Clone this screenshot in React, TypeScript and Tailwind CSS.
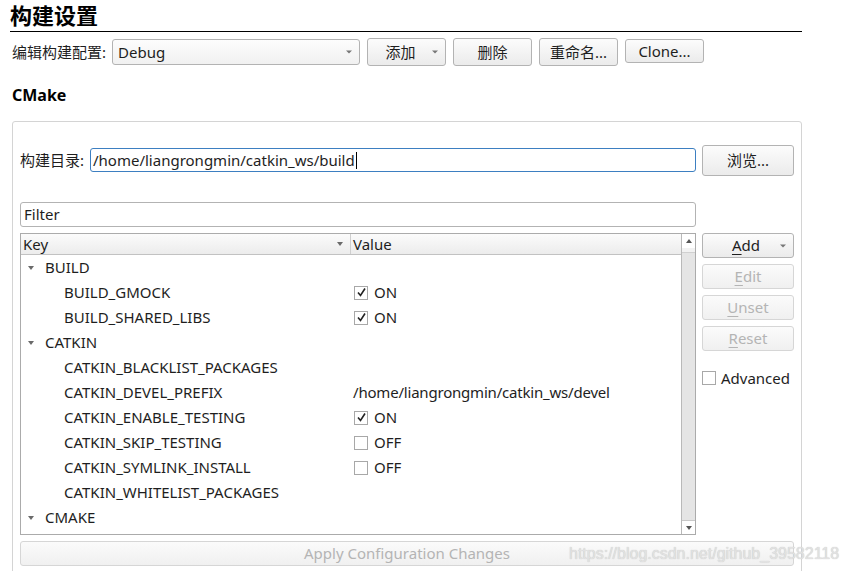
import React from "react";

const font = { fontFamily: '"Noto Sans", "Noto Sans CJK SC", sans-serif' };

function Btn({ children, className = "", disabled = false, arrow = false }: { children: React.ReactNode; className?: string; disabled?: boolean; arrow?: boolean }) {
  return (
    <div
      className={
        "relative flex items-center justify-center rounded-[3px] border text-[15px] " +
        (disabled
          ? "border-[#d6d6d6] bg-gradient-to-b from-[#fbfbfb] to-[#f0f0f0] text-[#b4b4b4] "
          : "border-[#b3b3b3] bg-gradient-to-b from-[#fcfcfc] to-[#ebebeb] text-[#1e1e1e] ") +
        className
      }
    >
      {children}
      {arrow && (
        <span className="absolute right-[7px] top-1/2 -translate-y-1/2 h-0 w-0 border-l-[3px] border-r-[3px] border-t-[3px] border-l-transparent border-r-transparent border-t-[#777]" />
      )}
    </div>
  );
}

function Check({ on }: { on: boolean }) {
  return (
    <span className="flex h-[14px] w-[14px] items-center justify-center border border-[#a8a8a8] bg-white">
      {on && (
        <svg width="11" height="11" viewBox="0 0 11 11">
          <path d="M2 5.5 L4.5 8.5 L9 1.5" fill="none" stroke="#222" strokeWidth="1.6" />
        </svg>
      )}
    </span>
  );
}

function Tri() {
  return <span className="h-0 w-0 border-l-[3.5px] border-r-[3.5px] border-t-[4px] border-l-transparent border-r-transparent border-t-[#6a6a6a]" />;
}

type Row = { key: string; group?: boolean; value?: string; check?: boolean; on?: boolean };

const rows: Row[] = [
  { key: "BUILD", group: true },
  { key: "BUILD_GMOCK", check: true, on: true, value: "ON" },
  { key: "BUILD_SHARED_LIBS", check: true, on: true, value: "ON" },
  { key: "CATKIN", group: true },
  { key: "CATKIN_BLACKLIST_PACKAGES" },
  { key: "CATKIN_DEVEL_PREFIX", value: "/home/liangrongmin/catkin_ws/devel" },
  { key: "CATKIN_ENABLE_TESTING", check: true, on: true, value: "ON" },
  { key: "CATKIN_SKIP_TESTING", check: true, on: false, value: "OFF" },
  { key: "CATKIN_SYMLINK_INSTALL", check: true, on: false, value: "OFF" },
  { key: "CATKIN_WHITELIST_PACKAGES" },
  { key: "CMAKE", group: true },
];

export default function App() {
  return (
    <div className="relative h-[571px] w-[850px] overflow-hidden bg-white text-[#1e1e1e]" style={font}>
      {/* Title */}
      <div className="ml-[10px] w-[792px] border-b border-black pt-[1px] pb-[1px]">
        <div className="h-[29px] text-[22px] font-bold leading-[29px] text-black">构建设置</div>
      </div>

      {/* Config row */}
      <div className="mt-[7px] flex h-[26px] items-center">
        <span className="ml-[12px] w-[100px] text-[15px]">编辑构建配置:</span>
        <div className="relative flex h-[26px] w-[248px] items-center rounded-[3px] border border-[#b3b3b3] bg-gradient-to-b from-[#fdfdfd] to-[#f1f1f1] pl-[5px] text-[15px]">
          Debug
          <span className="absolute right-[7px] top-1/2 -translate-y-1/2 h-0 w-0 border-l-[3px] border-r-[3px] border-t-[3px] border-l-transparent border-r-transparent border-t-[#777]" />
        </div>
        <Btn className="ml-[7px] h-[28px] w-[79px] pr-[12px]" arrow>添加</Btn>
        <Btn className="ml-[7px] h-[28px] w-[79px]">删除</Btn>
        <Btn className="ml-[7px] h-[28px] w-[79px]">重命名...</Btn>
        <Btn className="ml-[7px] h-[24px] w-[79px] -mt-[2px]">Clone...</Btn>
      </div>

      {/* CMake heading */}
      <div className="ml-[12px] mt-[20px] h-[20px] text-[16px] font-bold leading-[20px] text-black">CMake</div>

      {/* Group box */}
      <div className="ml-[12px] mt-[16px] h-[480px] w-[790px] rounded-[3px] border border-[#d4d4d4] pl-[7px] pr-[7px]">
        {/* build dir */}
        <div className="mt-[23px] flex h-[30px] items-center">
          <span className="w-[70px] text-[15px]">构建目录:</span>
          <div className="flex h-[24px] w-[606px] items-center rounded-[3px] border border-[#3d7fc1] pl-[2px] text-[15px]">
            /home/liangrongmin/catkin_ws/build
            <span className="ml-[1px] inline-block h-[17px] w-px bg-black" />
          </div>
          <Btn className="ml-[6px] h-[31px] w-[92px]">浏览...</Btn>
        </div>

        {/* filter */}
        <div className="mt-[27px] flex h-[25px] w-[676px] items-center rounded-[3px] border border-[#b3b3b3] pl-[3px] text-[15px]">Filter</div>

        {/* tree + side buttons */}
        <div className="mt-[6px] flex">
          <div className="flex h-[302px] w-[676px] border border-[#ababab]">
            <div className="flex min-w-0 flex-1 flex-col">
              <div className="flex h-[21px] border-b border-[#c2c2c2] bg-gradient-to-b from-[#fbfbfb] to-[#ececec] text-[15px]">
                <div className="flex w-[330px] items-center justify-between border-r border-[#cfcfcf] pl-[2px] pr-[7px]">
                  <span>Key</span>
                  <Tri />
                </div>
                <div className="flex items-center pl-[2px]">Value</div>
              </div>
              {rows.map((r) => (
                <div key={r.key} className="flex h-[25px] shrink-0 items-center text-[15px]">
                  <div className="flex w-[333px] items-center">
                    {r.group ? (
                      <>
                        <span className="ml-[7px] flex w-[17px] items-center">
                          <Tri />
                        </span>
                        <span>{r.key}</span>
                      </>
                    ) : (
                      <span className="ml-[43px]">{r.key}</span>
                    )}
                  </div>
                  {r.value && (
                    <div className="flex items-center">
                      {r.check && (
                        <span className="mr-[6px]">
                          <Check on={!!r.on} />
                        </span>
                      )}
                      <span className={r.check ? "" : "-ml-[1px] tracking-[-0.2px]"}>{r.value}</span>
                    </div>
                  )}
                </div>
              ))}
            </div>
            {/* scrollbar */}
            <div className="flex w-[14px] flex-col border-l border-[#b9b9b9] bg-[#e5e5e5]">
              <div className="flex h-[14px] items-center justify-center bg-white">
                <span className="h-0 w-0 border-b-[4px] border-l-[3.5px] border-r-[3.5px] border-b-[#555] border-l-transparent border-r-transparent" />
              </div>
              <div className="h-[5px] border-b border-[#d0d0d0] bg-[#f2f2f2]" />
              <div className="flex-1" />
              <div className="flex h-[14px] items-center justify-center border-t border-[#c8c8c8] bg-white">
                <span className="h-0 w-0 border-l-[3.5px] border-r-[3.5px] border-t-[4px] border-l-transparent border-r-transparent border-t-[#555]" />
              </div>
            </div>
          </div>

          <div className="ml-[6px] flex w-[92px] flex-col">
            <Btn className="h-[25px] pr-[4px]" arrow>
              <span><span className="underline underline-offset-[3px]">A</span>dd</span>
            </Btn>
            <Btn className="mt-[6px] h-[25px]" disabled>
              <span><span className="underline underline-offset-[3px]">E</span>dit</span>
            </Btn>
            <Btn className="mt-[6px] h-[25px]" disabled>
              <span><span className="underline underline-offset-[3px]">U</span>nset</span>
            </Btn>
            <Btn className="mt-[6px] h-[25px]" disabled>
              <span><span className="underline underline-offset-[3px]">R</span>eset</span>
            </Btn>
            <div className="mt-[16px] flex items-center text-[15px]">
              <Check on={false} />
              <span className="ml-[5px]">Advanced</span>
            </div>
          </div>
        </div>

        {/* apply */}
        <Btn className="mt-[6px] h-[25px] w-[774px]" disabled>
          Apply Configuration Changes
        </Btn>
      </div>

      {/* watermark */}
      <div
        className="absolute left-[569px] top-[542px] text-[16px] text-[#e2e2e2]"
        style={{ fontFamily: '"Liberation Sans", sans-serif', textShadow: "0 0 1px #bcbcbc" }}
      >
        https://blog.csdn.net/github_39582118
      </div>
    </div>
  );
}
